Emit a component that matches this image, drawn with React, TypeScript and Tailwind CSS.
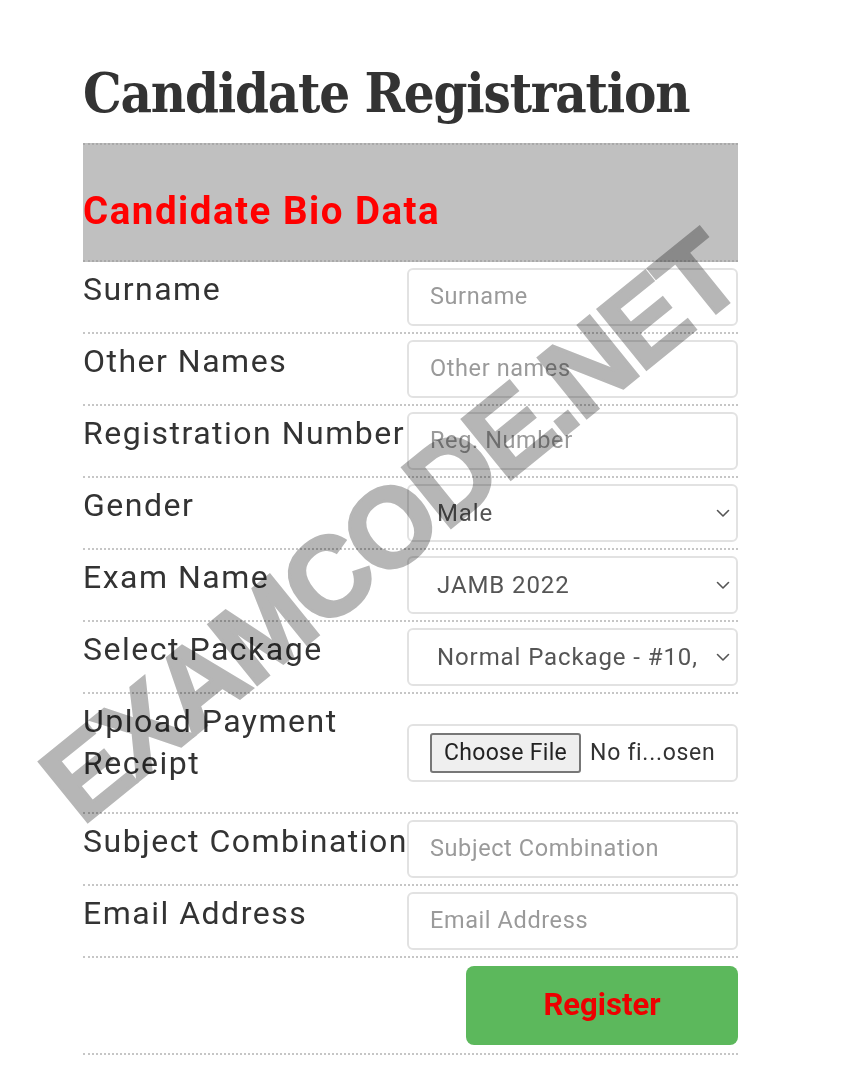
import React from "react";

const Chevron = () => (
  <svg width="14" height="9" viewBox="0 0 14 9" fill="none" className="shrink-0">
    <path d="M1.5 1.5 L7 7 L12.5 1.5" stroke="#555" strokeWidth="1.6" strokeLinecap="round" strokeLinejoin="round" />
  </svg>
);

function Row({ label, children, tall }: { label: React.ReactNode; children: React.ReactNode; tall?: boolean }) {
  return (
    <div className={`flex border-b-2 border-dotted border-[#c6c6c6] ${tall ? "min-h-[120px]" : "min-h-[72px]"}`}>
      <div className="w-[324px] shrink-0 pt-[6px] pb-[20px] text-[32px] leading-[42px] tracking-[1.5px] text-[#333] whitespace-nowrap">{label}</div>
      <div className="flex-1 flex items-center">{children}</div>
    </div>
  );
}

function TextInput({ placeholder }: { placeholder: string }) {
  return (
    <div className="w-full h-[58px] border-2 border-[#e2e2e2] rounded-[6px] flex items-center pl-[21px] text-[23.5px] tracking-[0.6px] text-[#9a9a9a] bg-white">
      {placeholder}
    </div>
  );
}

function Select({ value }: { value: string }) {
  return (
    <div className="w-full h-[58px] border-2 border-[#e2e2e2] rounded-[6px] flex items-center pl-[28px] pr-[6px] text-[24px] tracking-[0.9px] text-[#555] bg-white">
      <div className="w-[262px] overflow-hidden whitespace-nowrap">{value}</div>
      <div className="flex-1" />
      <Chevron />
    </div>
  );
}

export default function App() {
  return (
    <div className="relative min-h-[1080px] bg-white overflow-hidden" style={{ fontFamily: "Roboto, 'Liberation Sans', sans-serif" }}>
      <div className="ml-[83px] w-[655px] pt-[62px]">
        <h1
          className="text-[54px] leading-[62px] font-bold text-[#333] mb-[19px] tracking-[-1.2px] whitespace-nowrap"
          style={{ fontFamily: "'DejaVu Serif Condensed', 'DejaVu Serif', serif" }}
        >
          Candidate Registration
        </h1>
        <div className="h-[119px] bg-[#c0c0c0] border-y-2 border-dotted border-[#a9a9a9] pt-[44px]">
          <div className="text-[38.5px] leading-[44px] font-bold tracking-[1.5px] text-[#ff0000] whitespace-nowrap">Candidate Bio Data</div>
        </div>
        <Row label="Surname"><TextInput placeholder="Surname" /></Row>
        <Row label="Other Names"><TextInput placeholder="Other names" /></Row>
        <Row label="Registration Number"><TextInput placeholder="Reg. Number" /></Row>
        <Row label="Gender"><Select value="Male" /></Row>
        <Row label="Exam Name"><Select value="JAMB 2022" /></Row>
        <Row label="Select Package"><Select value="Normal Package - #10,000" /></Row>
        <Row tall label={<>Upload Payment<br />Receipt</>}>
          <div className="w-full h-[58px] border-2 border-[#e2e2e2] rounded-[6px] flex items-center pl-[21px] bg-white">
            <div className="h-[40px] px-[12px] flex items-center bg-[#efefef] border-2 border-[#777] rounded-[3px] text-[23px] tracking-[0.3px] text-[#222]">
              Choose File
            </div>
            <div className="ml-[9px] text-[23px] tracking-[0.7px] text-[#333] whitespace-nowrap">No fi...osen</div>
          </div>
        </Row>
        <Row label="Subject Combination"><TextInput placeholder="Subject Combination" /></Row>
        <Row label="Email Address"><TextInput placeholder="Email Address" /></Row>
        <div className="flex justify-end py-[8px] border-b-2 border-dotted border-[#c6c6c6]">
          <div className="w-[272px] h-[79px] rounded-[8px] bg-[#5cb85c] flex items-center justify-center text-[31px] font-bold text-[#ee0000]">
            Register
          </div>
        </div>
      </div>
      <div
        className="pointer-events-none absolute left-[390px] top-[528px] -translate-x-1/2 -translate-y-1/2 -rotate-[39deg] whitespace-nowrap text-[112px] leading-none font-bold text-[#b6b6b6] mix-blend-multiply tracking-[-4px] [-webkit-text-stroke:3px_#b6b6b6]"
        style={{ fontFamily: "'Liberation Sans', Arial, sans-serif" }}
      >
        EXAMCODE.NET
      </div>
    </div>
  );
}
